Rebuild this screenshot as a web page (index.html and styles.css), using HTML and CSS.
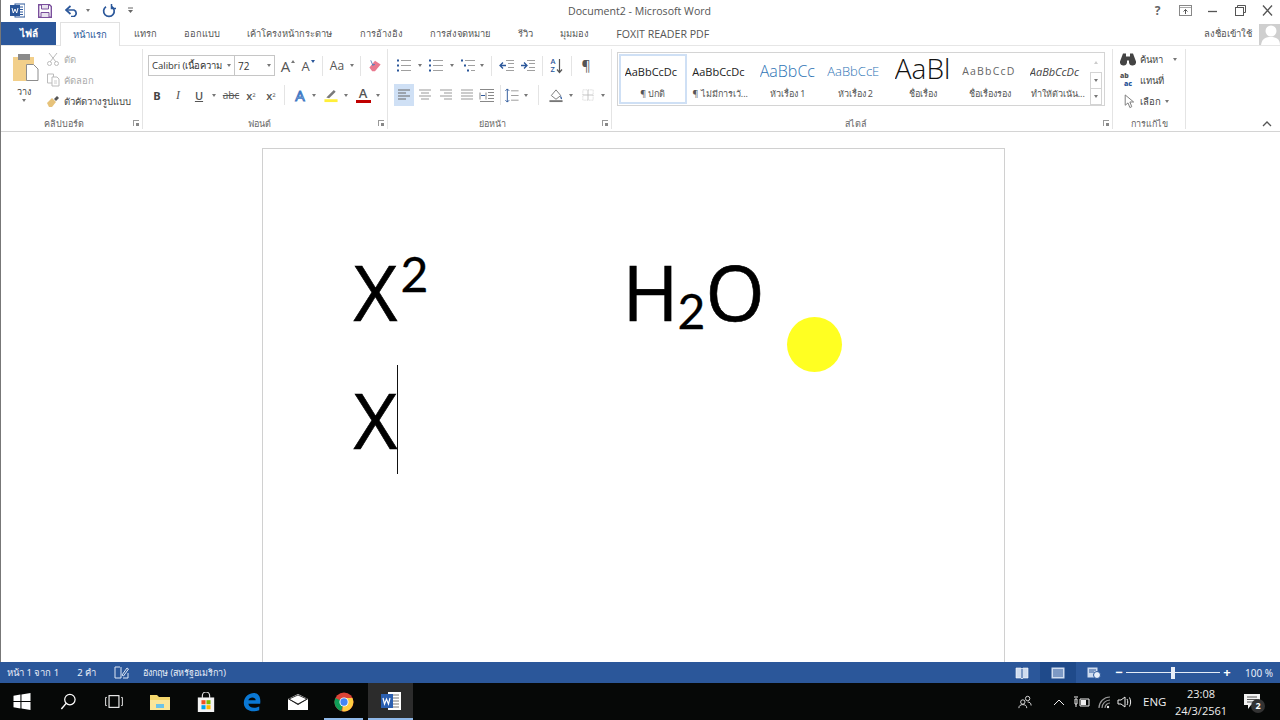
FILE: index.html
```html
<!DOCTYPE html>
<html lang="th">
<head>
<meta charset="utf-8">
<title>Document2 - Microsoft Word</title>
<link rel="stylesheet" href="styles.css">
</head>
<body>
<div class="app">
  <header class="titlebar">
    <div class="qat">
      <svg class="q-word" viewBox="0 0 15 15"><rect x="5" y="1" width="10" height="13" fill="#fff" stroke="#2b579a"/><path d="M8 4h5M8 6.5h5M8 9h5M8 11.500h5" stroke="#2b579a"/><rect y="2" width="10" height="11" fill="#2b579a"/><path d="M2 5l1.300 5 1.700-4 1.700 4L8 5" fill="none" stroke="#fff"/></svg>
      <svg class="q-save" viewBox="0 0 14 14"><path d="M.7.7h10.800l1.800 1.800v10.800H.7z" fill="#fff" stroke="#7a4f9c" stroke-width="1.400"/><path d="M3.500 1v4h7V1M3 13V8.500h8V13" fill="#e8e3ee" stroke="#7a4f9c"/></svg>
      <svg class="q-undo" viewBox="0 0 14 12"><path d="M2 5h7a3.500 3.500 0 0 1 0 6.500H6" fill="none" stroke="#2b579a" stroke-width="1.700"/><path d="M5.500 1 1 5l4.500 4" fill="none" stroke="#2b579a" stroke-width="1.700"/></svg>
      <span class="caret-d q-d1"></span>
      <svg class="q-redo" viewBox="0 0 14 14"><path d="M9.500 2.500a5.300 5.300 0 1 1-5.500.2" fill="none" stroke="#2b579a" stroke-width="1.700"/><path d="M9.500 0v4.500H14" fill="none" stroke="#2b579a" stroke-width="1.500"/></svg>
      <svg class="q-cust" viewBox="0 0 7 7"><path d="M1 1h5" stroke="#666"/><path d="M1 3h5L3.500 6z" fill="#666"/></svg>
    </div>
    <div class="doc-title">Document2 - Microsoft Word</div>
    <div class="win">
      <span class="help">?</span>
      <svg class="w-ic" viewBox="0 0 13 11"><rect x=".5" y=".5" width="12" height="10" fill="none" stroke="#888"/><path d="M1 2.500h11" stroke="#aaa"/><path d="M6.500 9V4.500M4.500 6.500l2-2 2 2" fill="none" stroke="#555"/></svg>
      <svg class="w-ic" viewBox="0 0 13 11"><path d="M2 6.500h9" stroke="#555" stroke-width="1.300"/></svg>
      <svg class="w-ic" viewBox="0 0 13 11"><path d="M3.500 2.500v-2h8v7h-2" fill="none" stroke="#555"/><rect x="1.500" y="2.500" width="8" height="8" fill="none" stroke="#555"/></svg>
      <svg class="w-ic" viewBox="0 0 13 11"><path d="M2 .5l9 10M11 .5l-9 10" stroke="#555" stroke-width="1.300"/></svg>
    </div>
  </header>

  <nav class="tabs">
    <span class="file">ไฟล์</span>
    <span class="tab active">หน้าแรก</span>
    <span class="tab">แทรก</span>
    <span class="tab">ออกแบบ</span>
    <span class="tab">เค้าโครงหน้ากระดาษ</span>
    <span class="tab">การอ้างอิง</span>
    <span class="tab">การส่งจดหมาย</span>
    <span class="tab">รีวิว</span>
    <span class="tab">มุมมอง</span>
    <span class="tab latin">FOXIT READER PDF</span>
    <span class="signin">ลงชื่อเข้าใช้</span>
    <span class="avatar"><svg viewBox="0 0 21 21"><rect width="21" height="21" fill="#cfcfcf"/><circle cx="12" cy="7" r="5.500" fill="#fff"/><path d="M2 21c1-7 5-8 10-8s9 2 9 8z" fill="#fff"/></svg></span>
  </nav>

  <section class="ribbon">
    <div class="group g-clip">
      <div class="g-body clip-body">
        <div class="paste">
          <svg class="paste-ic" viewBox="0 0 27 28"><rect x="1" y="4" width="21" height="24" fill="#f2cf8a"/><rect x="6" y="1" width="12" height="6" fill="#8a8a8a"/><path d="M14.500 11.500h7l4.500 4.500v11.500H14.500z" fill="#fff" stroke="#8c8c8c"/></svg>
          <span class="small">วาง</span>
          <span class="caret-d"></span>
        </div>
        <div class="clip-list">
          <div class="clip-row dim"><svg class="ic14" viewBox="0 0 14 14"><path d="M3 1l7 9M11 1l-7 9" stroke="#bbb" fill="none"/><circle cx="3.500" cy="11.500" r="2" fill="none" stroke="#bbb"/><circle cx="10.500" cy="11.500" r="2" fill="none" stroke="#bbb"/></svg><span>ตัด</span></div>
          <div class="clip-row dim"><svg class="ic14" viewBox="0 0 14 14"><path d="M1.500 1h6v9h-6z" fill="#fff" stroke="#bbb"/><path d="M6 4h5l2 2v7H6z" fill="#fff" stroke="#bbb"/><path d="M8 8h3M8 10h3" stroke="#ccc"/></svg><span>คัดลอก</span></div>
          <div class="clip-row"><svg class="ic14" viewBox="0 0 14 14"><path d="M1 9l5-5 4 4-4 5H3z" fill="#e6c27a"/><path d="M8 5l3-3 2 2-3 3z" fill="#555"/></svg><span>ตัวคัดวางรูปแบบ</span></div>
        </div>
      </div>
      <div class="g-label"><span>คลิปบอร์ด</span><i class="launch"></i></div>
    </div>

    <div class="group g-font">
      <div class="g-body rows">
        <div class="row r1">
          <div class="combo c-font"><span class="combo-v">Calibri (เนื้อความ</span><span class="caret-d"></span></div>
          <div class="combo c-size"><span class="combo-v">72</span><span class="caret-d"></span></div>
          <span class="t w4"></span>
          <span class="t w20 gl big-a">A<i class="tri up"></i></span>
          <span class="t w20 gl mid-a">A<i class="tri down"></i></span>
          <span class="sep s7"></span>
          <span class="t w20 gl aa">Aa</span><span class="t w9"><i class="caret-d"></i></span>
          <span class="sep s7"></span>
          <span class="t w20"><svg class="ic16" viewBox="0 0 16 16"><path d="M2 10l6-7 6 4-6 7H5z" fill="#e9798f"/><path d="M3.500 2.500l2.500 6M5 7h3" stroke="#5a7fb8" fill="none"/></svg></span>
        </div>
        <div class="row r2">
          <span class="t w18 gl b">B</span><span class="t w3"></span>
          <span class="t w18 gl it">I</span><span class="t w3"></span>
          <span class="t w18 gl un">U</span><span class="t w11"><i class="caret-d"></i></span><span class="t w2"></span>
          <span class="t w20 gl st">abc</span>
          <span class="t w20 gl sc">x<sub>2</sub></span>
          <span class="t w20 gl sc">x<sup>2</sup></span>
          <span class="sep s2"></span>
          <span class="t w20 gl fx">A</span><span class="t w8"><i class="caret-d"></i></span><span class="t w3"></span>
          <span class="t w20"><svg class="ic16" viewBox="0 0 16 16"><path d="M3 10l8-8 2 2-7 7z" fill="#7a7a7a"/><rect x="1" y="12" width="14" height="3" fill="#ffef3a"/></svg></span><span class="t w10"><i class="caret-d"></i></span><span class="t w2"></span>
          <span class="t w20 col-a"><b>A</b><i></i></span><span class="t w10"><i class="caret-d"></i></span>
        </div>
      </div>
      <div class="g-label"><span>ฟอนต์</span><i class="launch"></i></div>
    </div>

    <div class="group g-para">
      <div class="g-body rows">
        <div class="row r1 p1">
          <span class="t w18"><svg class="ic16" viewBox="0 0 16 14"><path d="M5 2h10M5 7h10M5 12h10" stroke="#a0a0a0"/><path d="M1 1h2v2H1zM1 6h2v2H1zM1 11h2v2H1z" fill="#2b579a"/></svg></span><span class="t w14"><i class="caret-d"></i></span>
          <span class="t w18"><svg class="ic16" viewBox="0 0 16 14"><path d="M5 2h10M5 7h10M5 12h10" stroke="#a0a0a0"/><path d="M1 1h2v2H1zM1 6h2v2H1zM1 11h2v2H1z" fill="#2b579a"/></svg></span><span class="t w14"><i class="caret-d"></i></span>
          <span class="t w18"><svg class="ic16" viewBox="0 0 16 14"><path d="M5 2h10M8 7h7M11 12h4" stroke="#a0a0a0"/><path d="M1 1h2v2H1zM4 6h2v2H4zM7 11h2v2H7z" fill="#2b579a"/></svg></span><span class="t w10"><i class="caret-d"></i></span>
          <span class="sep s3"></span>
          <span class="t w20"><svg class="ic16" viewBox="0 0 16 14"><path d="M7 2h8M7 12h8M9 5h6M9 9h6" stroke="#a0a0a0"/><path d="M7 7H1M4 4L1 7l3 3" fill="none" stroke="#2b579a" stroke-width="1.300"/></svg></span>
          <span class="t w21"><svg class="ic16" viewBox="0 0 16 14"><path d="M7 2h8M7 12h8M9 5h6M9 9h6" stroke="#a0a0a0"/><path d="M1 7h6M4 4l3 3-3 3" fill="none" stroke="#2b579a" stroke-width="1.300"/></svg></span>
          <span class="sep s4"></span>
          <span class="t w20 sort"><b>A<br>Z</b><svg viewBox="0 0 7 16"><path d="M3.500 1v13M1 11.500l2.500 3 2.500-3" fill="none" stroke="#555" stroke-width="1.200"/></svg></span>
          <span class="sep s4"></span>
          <span class="t w20 gl pil">¶</span>
        </div>
        <div class="row r2 p2">
          <span class="t w20 on"><svg class="ic13" viewBox="0 0 14 12"><path d="M1 1h12M1 4h8M1 7h12M1 10h8" stroke="#666"/></svg></span>
          <span class="t w21"><svg class="ic13" viewBox="0 0 14 12"><path d="M1 1h12M3 4h8M1 7h12M3 10h8" stroke="#999"/></svg></span>
          <span class="t w21"><svg class="ic13" viewBox="0 0 14 12"><path d="M1 1h12M5 4h8M1 7h12M5 10h8" stroke="#999"/></svg></span>
          <span class="t w21"><svg class="ic13" viewBox="0 0 14 12"><path d="M1 1h12M1 4h12M1 7h12M1 10h12" stroke="#999"/></svg></span>
          <span class="t w20"><svg class="ic16" viewBox="0 0 16 14"><path d="M1 1h14M9 4h6M9 7h6M9 10h6M1 13h14M1 4v7M7 4v7" stroke="#888"/><path d="M2 7h4" stroke="#2b579a"/></svg></span>
          <span class="sep s5"></span>
          <span class="t w16"><svg class="ic16" viewBox="0 0 16 16"><path d="M7 3h8M7 8h8M7 13h8" stroke="#999"/><path d="M3 1v14M1 3l2-2 2 2M1 13l2 2 2-2" fill="none" stroke="#2b579a"/></svg></span><span class="t w12"><i class="caret-d"></i></span>
          <span class="sep s6"></span>
          <span class="t w20"><svg class="ic16" viewBox="0 0 16 16"><path d="M3 8l5-6 5 6-5 4z" fill="#fff" stroke="#777"/><path d="M13 8c1 2 2 3 1 4-1 0-2-2-1-4z" fill="#2b579a"/><path d="M1 14h14" stroke="#777" stroke-width="2"/></svg></span><span class="t w10"><i class="caret-d"></i></span>
          <span class="t w2"></span>
          <span class="t w20"><svg class="ic13" viewBox="0 0 14 14"><rect x="1" y="1" width="12" height="12" fill="none" stroke="#ccc" stroke-dasharray="1 1"/><path d="M7 1v12M1 7h12" stroke="#bbb"/></svg></span><span class="t w10"><i class="caret-d"></i></span>
        </div>
      </div>
      <div class="g-label"><span>ย่อหน้า</span><i class="launch"></i></div>
    </div>

    <div class="group g-style">
      <div class="g-body">
        <div class="gallery">
          <div class="style sel"><span class="pv">AaBbCcDc</span><span class="nm">¶ ปกติ</span></div>
          <div class="style"><span class="pv">AaBbCcDc</span><span class="nm">¶ ไม่มีการเว้...</span></div>
          <div class="style"><span class="pv h1">AaBbCc</span><span class="nm">หัวเรื่อง 1</span></div>
          <div class="style"><span class="pv h2">AaBbCcE</span><span class="nm">หัวเรื่อง 2</span></div>
          <div class="style"><span class="pv tt">AaBl</span><span class="nm">ชื่อเรื่อง</span></div>
          <div class="style"><span class="pv sb">AaBbCcD</span><span class="nm">ชื่อเรื่องรอง</span></div>
          <div class="style"><span class="pv em">AaBbCcDc</span><span class="nm">ทำให้ตัวเน้น...</span></div>
          <div class="scroller">
            <span class="sc-b b-up"><i class="tri-up"></i></span>
            <span class="sc-b b-dn lined"><i class="caret-d"></i></span>
            <span class="sc-b b-more lined"><i class="caret-d"></i></span>
          </div>
        </div>
      </div>
      <div class="g-label"><span>สไตล์</span><i class="launch"></i></div>
    </div>

    <div class="group g-edit">
      <div class="g-body edit-list">
        <div class="clip-row"><svg class="ic16" viewBox="0 0 16 14"><path d="M3 1h3v3h4V1h3l3 8a3.500 3.500 0 0 1-7 1V8H7v2a3.500 3.500 0 0 1-7-1z" fill="#444"/></svg><span>ค้นหา</span><i class="caret-d ed-c"></i></div>
        <div class="clip-row"><span class="abac"><b>ab</b><b>ac</b></span><span>แทนที่</span></div>
        <div class="clip-row"><svg class="ic16" viewBox="0 0 16 16"><path d="M5 1v11l3-2.500 2 5 2-1-2-5h4z" fill="#fff" stroke="#777"/></svg><span>เลือก</span><i class="caret-d"></i></div>
      </div>
      <div class="g-label"><span>การแก้ไข</span></div>
    </div>
    <div class="collapse"><svg viewBox="0 0 10 6"><path d="M1 5l4-4 4 4" fill="none" stroke="#555" stroke-width="1.300"/></svg></div>
  </section>

  <main class="doc">
    <article class="page">
      <div class="line">
        <span class="cell-x">X<span class="sup">2</span></span>
        <span>H<span class="sub">2</span>O</span>
      </div>
      <div class="line"><span>X<span class="cursor"></span></span></div>
    </article>
    <div class="pointer"></div>
  </main>

  <footer class="status">
    <span class="st-a">หน้า 1 จาก 1</span>
    <span class="st-b">2 คำ</span>
    <svg class="st-book" viewBox="0 0 15 13"><path d="M5 1H1v11h6M9 12h5V7" fill="none" stroke="#dfe8f5"/><path d="M5 1h1M7 1v11" stroke="#dfe8f5"/><path d="M8 9l5-7 1.500 1L9.500 10z" fill="none" stroke="#dfe8f5"/></svg>
    <span class="st-c">อังกฤษ (สหรัฐอเมริกา)</span>
    <div class="st-views">
      <span class="view"><svg viewBox="0 0 14 12"><path d="M1 1h5l1 1 1-1h5v10H8l-1 1-1-1H1z" fill="#cfdcef" stroke="#fff" stroke-width=".6"/><path d="M7 2v9" stroke="#2b579a"/></svg></span>
      <span class="view on"><svg viewBox="0 0 14 12"><rect x=".5" y=".5" width="13" height="11" fill="#cfdcef"/><path d="M2 3h10M2 5h10M2 7h10M2 9h10" stroke="#2b579a"/></svg></span>
      <span class="view"><svg viewBox="0 0 14 12"><rect x=".5" y=".5" width="10" height="10" fill="#cfdcef"/><path d="M2 3h7M2 5h5" stroke="#2b579a"/><circle cx="10" cy="8" r="3.500" fill="#e9f0fa" stroke="#2b579a"/></svg></span>
    </div>
    <div class="zoomer">
      <span class="z-btn">−</span>
      <span class="z-track"><i></i></span>
      <span class="z-btn">+</span>
    </div>
    <span class="st-z">100 %</span>
  </footer>

  <footer class="taskbar">
    <span class="task"><svg class="tk20" viewBox="0 0 16 16"><path d="M0 2.500l6.500-1V7.500H0zM7.500 1.300 16 0v7.500H7.500zM0 8.500h6.500v6L0 13.500zM7.500 8.500H16V16l-8.500-1.300z" fill="#fff"/></svg></span>
    <span class="task"><svg class="tk20" viewBox="0 0 18 18"><circle cx="11" cy="7" r="5.500" fill="none" stroke="#fff" stroke-width="1.300"/><path d="M7 11l-5 6" stroke="#fff" stroke-width="1.500"/></svg></span>
    <span class="task"><svg class="tk20" viewBox="0 0 20 16"><rect x="4.500" y="1.500" width="11" height="13" fill="none" stroke="#fff" stroke-width="1.200"/><path d="M2 3.500H.7v9H2M18 3.500h1.300v9H18" fill="none" stroke="#fff"/></svg></span>
    <span class="task"><svg class="tk22" viewBox="0 0 22 18"><path d="M1 2h7l2 2h11v13H1z" fill="#f4d76c"/><path d="M1 7h20v10H1z" fill="#fae69a"/><path d="M7 11h8v4H7z" fill="#6cc3e8"/></svg></span>
    <span class="task"><svg class="tk22" viewBox="0 0 22 22"><path d="M2 6h18v16H2z" fill="#f3f3f3"/><path d="M7 7V4a4 4 0 0 1 8 0v3" fill="none" stroke="#ddd" stroke-width="1.300"/><path d="M6 9h4.500v4.500H6z" fill="#f25022"/><path d="M11.500 9H16v4.500h-4.500z" fill="#7fba00"/><path d="M6 14.500h4.500V19H6z" fill="#00a4ef"/><path d="M11.500 14.500H16V19h-4.500z" fill="#ffb900"/></svg></span>
    <span class="task"><svg class="tk22" viewBox="0 0 22 22"><path d="M20 13H7c.500 4 6 6 12 3v4c-8 3-17 0-17-8C2 5 8 1 13 1c5 0 8 4 7 12zM7 9h8c0-4-7-4-8 0z" fill="#0a78d4"/></svg></span>
    <span class="task"><svg class="tk22" viewBox="0 0 22 16"><path d="M1 5l10-5 10 5v11H1z" fill="#fff"/><path d="M1 5l10 6 10-6-10-2z" fill="#111"/><path d="M11 1l9 4-9 5-9-5z" fill="#fff" stroke="#111" stroke-width=".8"/></svg></span>
    <span class="task run"><svg class="tk22" viewBox="0 0 22 22"><circle cx="11" cy="11" r="10.500" fill="#db4437"/><path d="M11 11L1.500 6.500A10.500 10.500 0 0 0 8 21z" fill="#0f9d58"/><path d="M11 6.500h9.200A10.500 10.500 0 0 1 9 21.300z" fill="#ffcd40"/><circle cx="11" cy="11" r="5" fill="#fff"/><circle cx="11" cy="11" r="4" fill="#4285f4"/></svg></span>
    <span class="task on"><svg class="tk22" viewBox="0 0 22 20"><rect x="8" y="1" width="13" height="18" fill="#fff"/><path d="M11 4h8M11 7h8M11 10h8M11 13h8M11 16h8" stroke="#777"/><rect x="1" y="3" width="12" height="14" fill="#2b5fb0"/><path d="M3 7l1.500 6 2-5 2 5L10 7" fill="none" stroke="#fff" stroke-width="1.200"/></svg></span>
    <div class="tray">
      <svg class="tr16" viewBox="0 0 16 16"><circle cx="5.500" cy="8" r="2.500" fill="none" stroke="#eee"/><path d="M1 15c0-3 2-4 4.500-4S10 12 10 15" fill="none" stroke="#eee"/><circle cx="11" cy="4" r="2.500" fill="none" stroke="#eee"/><path d="M11 8c2 0 4 1 4 4" fill="none" stroke="#eee"/></svg>
      <svg class="tr12 tr-up" viewBox="0 0 12 8"><path d="M1 7l5-5 5 5" fill="none" stroke="#eee"/></svg>
      <svg class="tr16 tr-bat" viewBox="0 0 16 12"><path d="M6 3h9v7H6z" fill="none" stroke="#eee"/><path d="M7 4h5v5H7z" fill="#eee"/><path d="M1 3h2v5H1zM2 8v3M0 1h4" stroke="#eee" fill="none"/></svg>
      <svg class="tr16 tr-wifi" viewBox="0 0 16 14"><path d="M2 13A11 11 0 0 1 13 2M5 13a8 8 0 0 1 8-8M8 13a5 5 0 0 1 5-5" fill="none" stroke="#999" stroke-width="1.200"/><circle cx="11" cy="12" r="1.200" fill="#eee"/></svg>
      <svg class="tr16 tr-vol" viewBox="0 0 16 14"><path d="M1 5h3l4-3v10L4 9H1z" fill="none" stroke="#eee"/><path d="M10 4c1 2 1 4 0 6M12.500 2.500c1.500 3 1.500 6 0 9" fill="none" stroke="#eee"/></svg>
      <span class="eng">ENG</span>
      <span class="clock"><span>23:08</span><span>24/3/2561</span></span>
      <span class="notif"><svg viewBox="0 0 16 15"><path d="M0 0h16v11H7l-3 4v-4H0z" fill="#f2f2f2"/><path d="M3 3h10M3 5.500h10M3 8h10" stroke="#555"/></svg><b>2</b></span>
    </div>
  </footer>
</div>
</body>
</html>
```

FILE: styles.css
```css
* { box-sizing: border-box; }
html, body { margin: 0; padding: 0; }
body { width: 1280px; height: 720px; overflow: hidden; background: #fff; font-family: "Noto Sans", "Open Sans", "DejaVu Sans", sans-serif; color: #444; font-size: 10px; }
svg { display: block; flex: none; }
i { font-style: normal; }

.app { width: 1280px; height: 720px; display: flex; flex-direction: column; border-left: 1px solid #777; }

/* title bar */
.titlebar { height: 22px; flex: none; display: flex; align-items: center; padding-bottom: 1px; }
.qat { width: 567px; display: flex; align-items: center; padding-left: 9px; flex: none; }
.q-word { width: 15px; height: 15px; }
.q-save { width: 14px; height: 14px; margin-left: 13px; }
.q-undo { width: 14px; height: 12px; margin-left: 13px; }
.q-d1 { margin-left: 7px; }
.q-redo { width: 14px; height: 14px; margin-left: 12px; }
.q-cust { width: 7px; height: 7px; margin-left: 11px; }
.doc-title { font-family: "Open Sans", sans-serif; font-size: 10.600px; color: #555; width: 146px; flex: none; white-space: nowrap; }
.win { margin-left: auto; width: 129px; display: flex; align-items: center; justify-content: space-between; padding-right: 6px; }
.help { font: bold 12px "Open Sans", sans-serif; width: 13px; text-align: center; color: #666; }
.w-ic { width: 13px; height: 11px; }

.caret-d { display: inline-block; flex: none; width: 0; height: 0; border-left: 2.500px solid transparent; border-right: 2.500px solid transparent; border-top: 3px solid #777; }

/* tabs */
.tabs { height: 23px; flex: none; display: flex; align-items: stretch; font-size: 9.300px; color: #555; }
.file { width: 55px; background: #2b579a; color: #fff; display: flex; align-items: center; justify-content: center; font-weight: 700; font-size: 10px; }
.tab { display: flex; align-items: center; padding: 0 13.700px; white-space: nowrap; }
.tab.active { margin-left: 4px; width: 60px; padding: 0; justify-content: center; color: #2b579a; border: 1px solid #e1e1e1; border-bottom: 0; background: #fff; position: relative; z-index: 1; margin-bottom: -1px; font-size: 9.500px; }
.tab.latin { font: 10.600px "Open Sans", sans-serif; }
.signin { margin-left: auto; display: flex; align-items: center; font-size: 9.500px; }
.avatar { margin-left: 7px; margin-top: 2px; width: 21px; }
.avatar svg { width: 21px; height: 21px; }

/* ribbon */
.ribbon { height: 87px; flex: none; display: flex; border-top: 1px solid #e6e6e6; border-bottom: 1px solid #d4d4d4; }
.group { flex: none; display: flex; flex-direction: column; border-right: 1px solid #e4e4e4; margin: 3px 0 2px; }
.g-body { height: 68px; flex: none; }
.g-label { height: 13px; display: flex; align-items: center; justify-content: center; font-size: 9px; color: #666; position: relative; }
.g-clip .g-label { padding-right: 16px; }
.g-font .g-label { padding-right: 12px; }
.g-para .g-label { padding-right: 14px; }
.g-style .g-label { padding-right: 12px; }
.launch { position: absolute; right: 3px; top: 3px; width: 6px; height: 6px; border-left: 1px solid #999; border-top: 1px solid #999; }
.launch::after { content: ""; display: block; margin: 2px 0 0 2px; width: 3px; height: 3px; background: #888; }

.g-clip { width: 142px; }
.g-font { width: 245px; }
.g-para { width: 224px; }
.g-style { width: 501px; }
.g-edit { width: 73px; }

.clip-body { display: flex; }
.paste { width: 46px; display: flex; flex-direction: column; align-items: center; padding-top: 4px; }
.paste-ic { width: 27px; height: 28px; margin-left: 2px; }
.small { font-size: 9px; margin-top: 4px; line-height: 14px; }
.clip-list { display: flex; flex-direction: column; gap: 7px; padding-top: 3px; margin-left: -1px; }
.clip-row { display: flex; align-items: center; gap: 4px; height: 14px; font-size: 9.500px; white-space: nowrap; }
.dim { color: #aaa; }
.ic14 { width: 14px; height: 14px; }
.ic16 { width: 16px; height: 15px; }
.ic13 { width: 14px; height: 12px; }

.rows { display: flex; flex-direction: column; padding-left: 5px; gap: 8px; padding-top: 6px; }
.row { display: flex; align-items: center; height: 21px; }
.r2 { height: 22px; }
.p1 { padding-left: 2px; }
.p2 { padding-left: 1px; }
.t { flex: none; display: flex; align-items: center; justify-content: center; height: 21px; color: #555; }
.w2 { width: 2px; } .w3 { width: 3px; } .w4 { width: 3px; } .w8 { width: 8px; } .w9 { width: 9px; }
.w10 { width: 10px; } .w11 { width: 11px; } .w12 { width: 12px; } .w14 { width: 14px; } .w16 { width: 16px; }
.w18 { width: 18px; } .w20 { width: 20px; } .w21 { width: 21px; }
.t.on { background: #cfe0f5; height: 22px; }
.sep { flex: none; width: 1px; height: 20px; background: #e4e4e4; margin: 0 5px; }
.s2 { margin: 0 5px 0 3px; }
.s3 { margin: 0 5px 0 4px; }
.s4 { margin: 0 4px; }
.s5 { margin: 0 3px; }
.s6 { margin: 0 7px 0 6px; }
.s7 { margin: 0 4px; }

.combo { flex: none; height: 21px; display: flex; align-items: center; gap: 2px; border: 1px solid #c6c6c6; padding: 0 3px; font: 9.500px "Open Sans", "Noto Sans", sans-serif; color: #333; white-space: nowrap; }
.combo-v { flex: 1; min-width: 0; overflow: hidden; }
.c-font { width: 87px; }
.c-size { width: 41px; margin-left: -1px; font-size: 10px; }

.gl { font-family: "Open Sans", sans-serif; }
.big-a { font-size: 15px; }
.mid-a { font-size: 13px; }
.tri { width: 0; height: 0; border-left: 2px solid transparent; border-right: 2px solid transparent; margin: -8px 0 0 1px; }
.tri.up { border-bottom: 3px solid #777; }
.tri.down { border-top: 3px solid #2b579a; }
.aa { font-size: 12px; }
.b { font-weight: 700; font-size: 11px; color: #444; }
.it { font: italic 12px "Liberation Serif", serif; }
.un { font-size: 11px; font-weight: 600; text-decoration: underline; }
.st { font-size: 10px; text-decoration: line-through; }
.sc { font-size: 11px; font-weight: 600; }
.sc sub, .sc sup { font-size: 6px; font-weight: 400; }
.fx { font-size: 15px; color: #dfe9f7; -webkit-text-stroke: 1px #3f78c4; }
.col-a { flex-direction: column; }
.col-a b { font: 600 13px/13px "Open Sans", sans-serif; color: #555; }
.col-a i { width: 15px; height: 3px; background: #c00000; }
.sort { gap: 1px; }
.sort b { font: 600 7.500px/7.500px "Open Sans", sans-serif; color: #2b579a; }
.sort svg { width: 7px; height: 16px; }
.pil { font-size: 14px; }

.gallery { margin: 3px 0 0 5px; width: 488px; height: 54px; border: 1px solid #d4d4d4; display: flex; padding: 1px 0 0 1px; }
.style { width: 67.500px; height: 50px; flex: none; display: flex; flex-direction: column; align-items: center; overflow: hidden; border: 2px solid transparent; }
.style.sel { border-color: #cfe0f5; }
.pv { height: 30px; width: 56px; overflow: hidden; display: flex; align-items: center; white-space: nowrap; font: 11px "Open Sans", sans-serif; color: #222; }
.pv.h1 { font-size: 16px; color: #2e74b5; font-weight: 300; }
.pv.h2 { font-size: 13px; color: #2e74b5; font-weight: 300; }
.pv.tt { font-size: 28px; font-weight: 300; color: #111; line-height: 24px; align-items: flex-start; }
.pv.sb { font-size: 10.500px; color: #666; letter-spacing: 1.200px; }
.pv.em { font-style: italic; color: #444; }
.nm { font-size: 9px; line-height: 15px; white-space: nowrap; color: #555; }
.scroller { width: 12px; margin: -1px 0 0 -2px; flex: none; display: flex; flex-direction: column; }
.sc-b { display: flex; align-items: center; justify-content: center; }
.b-up { height: 19px; }
.b-dn { height: 17px; }
.b-more { height: 17px; }
.lined { border: 1px solid #d4d4d4; margin-bottom: -1px; }
.tri-up { width: 0; height: 0; border-left: 2.500px solid transparent; border-right: 2.500px solid transparent; border-bottom: 3px solid #ccc; }

.edit-list { display: flex; flex-direction: column; gap: 7px; padding: 3px 0 0 7px; }
.ed-c { margin-left: 6px; }
.abac { width: 16px; display: flex; flex-direction: column; font: 600 7px/8px "Open Sans", sans-serif; }
.abac b:first-child { color: #555; }
.abac b:last-child { color: #2b579a; margin-left: 4px; }
.collapse { margin: auto 0 4px 76px; }
.collapse svg { width: 10px; height: 6px; }

/* document */
.doc { flex: 1; min-height: 0; background: #fff; display: flex; justify-content: center; padding: 16px 15px 0 0; position: relative; overflow: hidden; }
.page { width: 743px; height: 800px; flex: none; border: 1px solid #d0d0d0; padding: 79px 0 0 91px; font: 76px/128px "Open Sans", sans-serif; color: #000; -webkit-text-stroke: .6px #000; }
.line { display: flex; height: 128px; white-space: pre; align-items: baseline; }
.cell-x { width: 269px; }
.sup, .sub { font-family: Lato, sans-serif; font-size: 48px; line-height: 0; -webkit-text-stroke: .3px #000; }
.sup { vertical-align: 29px; margin-left: 3px; }
.sub { vertical-align: -8px; margin-left: -1px; }
.cursor { display: inline-block; width: 1px; height: 109px; background: #111; margin: 0 0 -25px 0; }
.pointer { position: absolute; left: 786px; top: 185px; width: 55px; height: 55px; border-radius: 50%; background: #ffff22; }

/* status bar */
.status { height: 21px; flex: none; background: #2b579a; color: #e8eef8; display: flex; align-items: center; font-size: 9.500px; margin-left: -1px; white-space: nowrap; }
.st-a { margin-left: 7px; }
.st-b { margin-left: 18px; }
.st-book { width: 15px; height: 13px; margin-left: 18px; }
.st-c { margin-left: 14px; font-size: 9px; }
.st-views { margin-left: auto; display: flex; height: 21px; }
.view { width: 36px; display: flex; align-items: center; justify-content: center; }
.view.on { background: #1f4a8a; }
.view svg { width: 14px; height: 12px; }
.zoomer { display: flex; align-items: center; margin-left: 2px; }
.z-btn { width: 10px; font: bold 13px/21px "Open Sans", sans-serif; color: #fff; text-align: center; }
.z-track { width: 94px; height: 1px; background: #e4ecf7; margin: 0 2px; display: flex; justify-content: center; align-items: center; }
.z-track i { width: 4px; height: 12px; background: #e8eef8; flex: none; }
.st-z { font-size: 10px; margin: 0 5px 0 13px; width: 30px; }

/* task bar */
.taskbar { height: 37px; flex: none; background: #060807; display: flex; align-items: center; margin-left: -1px; color: #eee; }
.task { width: 46px; height: 37px; display: flex; align-items: center; justify-content: center; flex: none; }
.task:first-child { margin-left: -1px; }
.task.run { box-shadow: inset 0 -2px 0 #8fb8e8; border-right: 4px solid #060807; border-left: 3px solid #060807; padding: 0; }
.task.on { background: #2c2c2c; border-bottom: 2px solid #8fb8e8; width: 45px; margin-left: 1px; }
.tk20 { width: 18px; height: 17px; }
.tk22 { width: 22px; height: 20px; }
.tray { margin-left: auto; display: flex; align-items: center; padding-right: 20px; }
.tr16 { width: 16px; height: 14px; }
.tr12 { width: 12px; height: 8px; }
.tr-up { margin-left: 20px; }
.tr-bat { margin-left: 9px; }
.tr-wifi { margin-left: 7px; }
.tr-vol { margin-left: 4px; }
.eng { font: 11.500px "Open Sans", sans-serif; margin-left: 10px; width: 23px; white-space: nowrap; }
.clock { display: flex; flex-direction: column; align-items: center; font: 11px/17px "Open Sans", sans-serif; margin-left: 10px; width: 50px; }
.notif { position: relative; width: 16px; height: 15px; margin-left: 18px; }
.notif svg { width: 16px; height: 15px; }
.notif b { position: absolute; left: 7px; top: 5px; width: 14px; height: 14px; border-radius: 50%; background: #333; color: #fff; font: 700 9px/14px "Open Sans", sans-serif; text-align: center; }
```
